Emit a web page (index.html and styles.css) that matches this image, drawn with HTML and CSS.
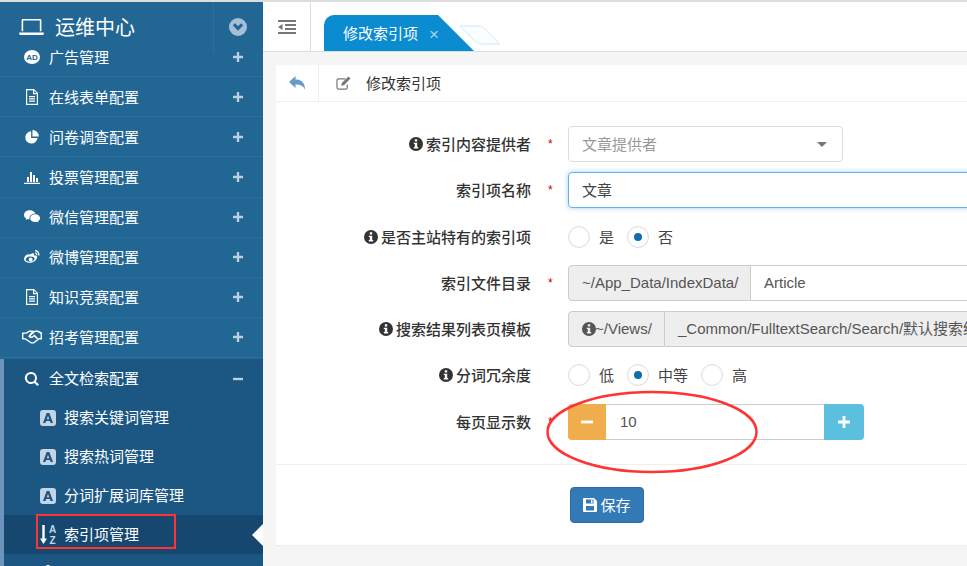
FILE: index.html
```html
<!DOCTYPE html>
<html lang="zh">
<head>
<meta charset="utf-8">
<title>运维中心</title>
<link rel="stylesheet" href="styles.css">
</head>
<body>
<svg class="sprite" width="0" height="0" aria-hidden="true">
  <symbol id="plus" viewBox="0 0 12 12"><path d="M4.600 0h2.800v4.600H12v2.800H7.400V12H4.600V7.400H0V4.600h4.600z"/></symbol>
  <symbol id="doc" viewBox="0 0 14 16"><path fill-rule="evenodd" d="M1 0h8l4 4v12H1zM2.200 1.200v13.600h9.600V5.200H8V1.200zM9.200 1.600v2.400h2.400zM4 7h6v1.200H4zM4 9.300h6v1.200H4zM4 11.600h6v1.200H4z"/></symbol>
  <symbol id="letter" viewBox="0 0 16 16"><path fill-rule="evenodd" d="M3 0h10a3 3 0 0 1 3 3v10a3 3 0 0 1-3 3H3a3 3 0 0 1-3-3V3a3 3 0 0 1 3-3zM6.700 3 3 13h2.400l.7-2h3.800l.7 2H13L9.300 3zM8 5.800 9.200 9.200H6.800z"/></symbol>
  <symbol id="info" viewBox="0 0 14 14"><path fill-rule="evenodd" d="M7 0a7 7 0 1 1 0 14A7 7 0 0 1 7 0zM5.800 2.200v2.200h2.400V2.200zM4.800 5.700v1.300h1v3.100h-1v1.500h4.400v-1.500h-1V5.700z"/></symbol>
</svg>
<div class="app">
  <aside class="sidebar">
    <header class="brand">
      <div class="brand-title">
        <svg class="brand-icon" viewBox="0 0 26 18"><path fill-rule="evenodd" d="M4 0h18a1.500 1.500 0 0 1 1.500 1.500V13h-1.700V1.700H4.200V13H2.500V1.500A1.500 1.500 0 0 1 4 0zM0 14.400h26v1.300a1.300 1.300 0 0 1-1.300 1.300H1.300A1.300 1.300 0 0 1 0 15.700z"/></svg>
        <span>运维中心</span>
      </div>
      <div class="brand-toggle">
        <svg viewBox="0 0 18 18"><circle cx="9" cy="9" r="9" fill="#a5bfd6"/><path d="M3.800 7.300 6 5.300 9 8.300l3-3 2.200 2L9 12.800z" fill="#22658f"/></svg>
      </div>
    </header>
    <ul class="menu">
      <li class="item">
        <svg class="icon" viewBox="0 0 16 14"><ellipse cx="8" cy="7" rx="8" ry="7" fill="#fff"/><text class="ad-mark" x="8" y="10" text-anchor="middle">AD</text></svg>
        <span class="label">广告管理</span><svg class="toggle"><use href="#plus"/></svg>
      </li>
      <li class="item"><svg class="icon icon-doc"><use href="#doc"/></svg><span class="label">在线表单配置</span><svg class="toggle"><use href="#plus"/></svg></li>
      <li class="item">
        <svg class="icon" viewBox="0 0 16 16"><path d="M7 1.500A7 7 0 1 0 14.300 9H7zM8.500 0v7.500H16A7.500 7.500 0 0 0 8.500 0z"/></svg>
        <span class="label">问卷调查配置</span><svg class="toggle"><use href="#plus"/></svg>
      </li>
      <li class="item">
        <svg class="icon" viewBox="0 0 16 14"><path d="M3 7h2v5H3zM6 2h2v10H6zM9 5h2v7H9zM12 8h2v4h-2zM0 12.700h16V14H0z"/></svg>
        <span class="label">投票管理配置</span><svg class="toggle"><use href="#plus"/></svg>
      </li>
      <li class="item">
        <svg class="icon" viewBox="0 0 18 15"><path d="M6.500 0C2.900 0 0 2.300 0 5.200c0 1.600.9 3 2.400 4L1.800 11l2.200-1.200c.7.200 1.500.3 2.300.3a5 5 0 0 1-.2-1.300C6.100 6 8.700 3.900 12.100 3.900h.7C12.100 1.700 9.500 0 6.500 0z"/><path d="M18 8.800c0-2.400-2.500-4.300-5.500-4.300S7 6.400 7 8.800s2.500 4.300 5.500 4.300c.6 0 1.300-.1 1.900-.3l1.800 1-.5-1.500c1.400-.9 2.300-2.100 2.300-3.500z"/></svg>
        <span class="label">微信管理配置</span><svg class="toggle"><use href="#plus"/></svg>
      </li>
      <li class="item">
        <svg class="icon" viewBox="0 0 16 14"><path fill-rule="evenodd" d="M6.500 4.300c2-1.400 3.500-1.300 3.700.2l-.1 1c1.800-.4 3 .2 3 1.500 0 2.800-3.500 5.800-7.200 5.800C3 12.800 0 11.400 0 9c0-1.400 1-3 3-4.400zM6 6.500C3.500 6.700 1.600 8 1.700 9.600 1.900 11 3.900 12 6.300 11.800 8.800 11.600 10.700 10.200 10.600 8.700 10.400 7.200 8.400 6.300 6 6.500zM5.800 7.800a2 2 0 1 1 0 3.600 2 2 0 0 1 0-3.600zM11 0c2.800 0 5 2.500 4.400 5.400h-1.300C14.500 3.200 13 1.300 11 1.300zM11 2.300c1.500 0 2.600 1.300 2.300 3h-1.200c.2-1-.3-1.800-1.100-1.800z"/></svg>
        <span class="label">微博管理配置</span><svg class="toggle"><use href="#plus"/></svg>
      </li>
      <li class="item"><svg class="icon icon-doc"><use href="#doc"/></svg><span class="label">知识竞赛配置</span><svg class="toggle"><use href="#plus"/></svg></li>
      <li class="item">
        <svg class="icon icon-wide" viewBox="0 0 20 13"><path fill-rule="evenodd" d="M0 2h4l3-2h3.500l1 .5L13 0h3l4 2v7h-3l-5 4H9L3 9H0zM1.400 3.300v4.400H3.500l6 4h2l5-4.100h2.100V3.300L15.500 1.400H13L8.500 5.400c.6.800 1.500.8 2.200.2L12.400 4l4 4-1 1-3.400-3-1 .9c-1.500 1-3.700.7-4.800-1.200L9.500 1.400H7.500L4.500 3.300z"/></svg>
        <span class="label">招考管理配置</span><svg class="toggle"><use href="#plus"/></svg>
      </li>
      <li class="group">
        <div class="item item-open">
          <svg class="icon" viewBox="0 0 14 14"><path fill-rule="evenodd" d="M6 0a6 6 0 0 1 4.800 9.500l3.200 3.100-1.600 1.400-3.100-3.100A6 6 0 1 1 6 0zM6 2a4 4 0 1 0 0 8 4 4 0 0 0 0-8z"/></svg>
          <span class="label">全文检索配置</span>
          <svg class="toggle" viewBox="0 0 12 12"><path d="M0 4.600h12v2.800H0z"/></svg>
        </div>
        <ul class="submenu">
          <li class="sub"><svg class="sub-icon"><use href="#letter"/></svg><span>搜索关键词管理</span></li>
          <li class="sub"><svg class="sub-icon"><use href="#letter"/></svg><span>搜索热词管理</span></li>
          <li class="sub"><svg class="sub-icon"><use href="#letter"/></svg><span>分词扩展词库管理</span></li>
          <li class="sub sub-active">
            <svg class="sort-icon" viewBox="0 0 17 19"><path d="M2.300 0h2.400v13.500h2.300L3.500 19 0 13.500h2.300z" fill="#fff"/><text class="sort-mark" x="12.500" y="8" text-anchor="middle">A</text><text class="sort-mark" x="12.500" y="18.500" text-anchor="middle">Z</text></svg>
            <span>索引项管理</span>
            <i class="sub-arrow"></i>
          </li>
          <li class="sub">
            <svg class="sub-tip" viewBox="0 0 16 18"><path d="M8 0a2.500 2.500 0 0 1 2.500 2.500V4L16 9v9H0V9l5.500-5V2.500A2.500 2.500 0 0 1 8 0z"/></svg>
          </li>
        </ul>
      </li>
    </ul>
  </aside>

  <main class="main">
    <div class="topbar">
      <div class="collapse">
        <svg viewBox="0 0 18 14"><path d="M0 0h18v2H0zM7 4h11v2H7zM7 8h11v2H7zM0 12h18v2H0zM0 7l4.500-3v6z" fill="#777"/></svg>
      </div>
      <div class="tabs">
        <div class="tab">
          <span>修改索引项</span><span class="tab-close">×</span>
        </div>
        <div class="ghost-tab"></div>
      </div>
    </div>
    <section class="card">
      <div class="card-head">
        <div class="back">
          <svg viewBox="0 0 16 14"><path d="M6.500 0v3.500C12 3.500 16 6 16 14c-1.500-4.200-4.500-5.500-9.500-5.500V12L0 6z" fill="#6a9bc8"/></svg>
        </div>
        <div class="card-title">
          <svg viewBox="0 0 16 15"><path fill="none" stroke="#777" stroke-width="1.300" d="M12 9v3.300a1.700 1.700 0 0 1-1.700 1.700H2.700A1.700 1.700 0 0 1 1 12.300V4.700A1.700 1.700 0 0 1 2.700 3H10"/><path fill="#777" d="M13.200 0.500 15.500 2.800 8.500 9.800 5.500 10.500 6.200 7.500z"/></svg>
          <span>修改索引项</span>
        </div>
      </div>
      <form class="form">
        <div class="row">
          <label class="field-label"><svg class="info"><use href="#info"/></svg>索引内容提供者</label><span class="req">*</span>
          <div class="select"><span>文章提供者</span><i class="caret"></i></div>
        </div>
        <div class="row">
          <label class="field-label">索引项名称</label><span class="req">*</span>
          <div class="text-input">文章</div>
        </div>
        <div class="row">
          <label class="field-label"><svg class="info"><use href="#info"/></svg>是否主站特有的索引项</label><span class="req"></span>
          <div class="radios">
            <span class="radio"></span><span class="radio-text">是</span>
            <span class="radio checked"></span><span class="radio-text">否</span>
          </div>
        </div>
        <div class="row">
          <label class="field-label">索引文件目录</label><span class="req">*</span>
          <div class="group-input">
            <span class="addon addon-data">~/App_Data/IndexData/</span>
            <span class="group-text">Article</span>
          </div>
        </div>
        <div class="row">
          <label class="field-label"><svg class="info"><use href="#info"/></svg>搜索结果列表页模板</label><span class="req"></span>
          <div class="group-input">
            <span class="addon addon-views"><svg class="info info-addon"><use href="#info"/></svg>~/Views/</span>
            <span class="group-text group-readonly">_Common/FulltextSearch/Search/默认搜索结果列表页模板.cshtml</span>
          </div>
        </div>
        <div class="row">
          <label class="field-label"><svg class="info"><use href="#info"/></svg>分词冗余度</label><span class="req"></span>
          <div class="radios">
            <span class="radio"></span><span class="radio-text">低</span>
            <span class="radio checked"></span><span class="radio-text">中等</span>
            <span class="radio"></span><span class="radio-text">高</span>
          </div>
        </div>
        <div class="row">
          <label class="field-label">每页显示数</label><span class="req">*</span>
          <div class="stepper">
            <span class="step step-minus"><svg viewBox="0 0 12 12"><path d="M0 4.600h12v2.800H0z"/></svg></span>
            <span class="step-value">10</span>
            <span class="step step-plus"><svg><use href="#plus"/></svg></span>
          </div>
        </div>
      </form>
      <div class="actions">
        <button class="save" type="button">
          <svg viewBox="0 0 14 14"><path fill-rule="evenodd" d="M1 0h10l3 3v10a1 1 0 0 1-1 1H1a1 1 0 0 1-1-1V1a1 1 0 0 1 1-1zM3 1.500v4h7.500v-4zM8 2h1.500v3H8zM3 8v4.500h8V8z" fill="#fff"/></svg>
          保存
        </button>
      </div>
    </section>
  </main>
</div>
<div class="note-rect"></div>
<svg class="note-ellipse" viewBox="0 0 216 88"><ellipse cx="108" cy="44" rx="104.500" ry="40" fill="none" stroke="#f33" stroke-width="2.500"/></svg>
</body>
</html>
```
FILE: styles.css
```css
* { box-sizing: border-box; }
html, body { margin: 0; height: 100%; }
body {
  width: 967px;
  height: 566px;
  overflow: hidden;
  position: relative;
  font: 15px/20px "Noto Sans CJK SC", "Liberation Sans", sans-serif;
  color: #333;
  background: #f5f5f5;
  border-top: 2px solid #ddd;
}
ul { list-style: none; margin: 0; padding: 0; }
.sprite { position: absolute; }

.app { display: flex; height: 564px; }

.sidebar {
  width: 263px;
  flex: none;
  background: #226694;
  color: #fff;
  overflow: hidden;
}
.brand {
  position: relative;
  z-index: 1;
  display: flex;
  height: 50px;
}
.brand-title {
  flex: 1;
  display: flex;
  align-items: center;
  gap: 11px;
  padding-left: 19px;
  font-size: 20px;
  fill: #fff;
}
.brand-icon { width: 25px; height: 17px; }
.brand-toggle {
  width: 50px;
  border-left: 1px solid #2a6f9d;
  display: flex;
  align-items: center;
  padding-left: 15px;
}
.brand-toggle svg { width: 18px; height: 18px; }

.menu { margin-top: -15px; }
.item {
  display: flex;
  align-items: center;
  height: 40.140px;
  padding: 0 20px 0 24px;
  border-bottom: 1px solid #2b6f9e;
  fill: #fff;
}
.icon { width: 16px; height: 14px; flex: none; }
.icon-doc { height: 16px; }
.icon-wide { width: 20px; margin-left: -2px; margin-right: -2px; }
.ad-mark { font: bold 8px "Liberation Sans", sans-serif; fill: #226694; }
.label { flex: 1; margin-left: 9px; }
.toggle { width: 10px; height: 10px; fill: #bcd0e0; flex: none; }

.group {
  background: #1c5783;
  border-left: 4px solid #6c95bd;
  margin-top: 1px;
}
.item-open { border-bottom: 0; padding-left: 20px; height: 39px; }
.item-open .label { margin-bottom: 2px; }
.sub {
  display: flex;
  align-items: center;
  height: 39px;
  padding-left: 36px;
  gap: 8px;
  position: relative;
  fill: #fff;
}
.sub span { margin-bottom: 2px; }
.sub-icon { width: 16px; height: 16px; fill: #c3d5e4; flex: none; }
.sub-tip { width: 16px; height: 18px; flex: none; }
.sub-active { background: #15476f; }
.sort-icon { width: 17px; height: 19px; margin-right: -1px; flex: none; }
.sort-mark { font: bold 10px "Liberation Sans", sans-serif; fill: #c3d5e4; }
.sub-arrow {
  position: absolute;
  right: 0;
  top: 9px;
  border: 11px solid transparent;
  border-left: 0;
  border-right-color: #fff;
}

.main { width: 704px; flex: none; display: flex; flex-direction: column; }
.topbar {
  display: flex;
  height: 50px;
  background: #fff;
  border-bottom: 1px solid #ddd;
  flex: none;
}
.collapse {
  width: 48px;
  border-right: 1px solid #ddd;
  display: flex;
  align-items: center;
  justify-content: center;
  padding-left: 1px;
}
.collapse svg { width: 18px; height: 14px; }
.tabs { display: flex; align-items: flex-end; padding-left: 13px; }
.tab {
  width: 150px;
  height: 36px;
  background: #0b8bd0;
  color: #fff;
  display: flex;
  align-items: center;
  padding: 0 0 1px 19px;
  border-radius: 10px 0 0 0;
  clip-path: polygon(0 0, 76% 0, 100% 100%, 0 100%);
}
.tab-close {
  margin: 4px 0 0 11px;
  font: 17px/1 "Liberation Sans", sans-serif;
  color: #a9d5ef;
}
.ghost-tab {
  width: 24px;
  height: 20px;
  margin: 0 0 6px -6px;
  background: #fbfeff;
  border: 2px solid #e3f3fd;
  border-radius: 3px;
  transform: skewX(45deg);
}

.card {
  margin: 13px 0 0 13px;
  background: #fff;
  height: 481px;
  flex: none;
  border-bottom: 1px solid #eee;
  overflow: hidden;
}
.card-head {
  display: flex;
  height: 36px;
  border-bottom: 1px solid #eee;
  box-sizing: content-box;
}
.back {
  width: 43px;
  border-right: 1px solid #eee;
  display: flex;
  align-items: center;
  justify-content: center;
}
.back svg { width: 16px; height: 14px; }
.card-title { display: flex; align-items: center; gap: 15px; padding-left: 17px; }
.card-title svg { width: 15px; height: 14px; }

.form {
  display: flex;
  flex-direction: column;
  gap: 10.300px;
  padding: 24px 0;
  border-bottom: 1px solid #eee;
}
.row { display: flex; align-items: center; height: 36px; }
.field-label {
  width: 255px;
  flex: none;
  display: flex;
  justify-content: flex-end;
  align-items: center;
  font-weight: 500;
  color: #333;
}
.info { width: 14px; height: 14px; fill: #333; margin-right: 3px; flex: none; }
.req {
  width: 37px;
  flex: none;
  padding-left: 17px;
  color: #c00;
  font: 12px/16px "Liberation Sans", sans-serif;
}
.select, .text-input {
  display: flex;
  align-items: center;
  flex: none;
  height: 36px;
  width: 275px;
  padding: 0 13px;
  border: 1px solid #ddd;
  border-radius: 4px;
  color: #999;
  justify-content: space-between;
}
.caret {
  border: 5px solid transparent;
  border-top-color: #777;
  border-bottom: 0;
  margin-right: 2px;
}
.text-input {
  width: 500px;
  color: #444;
  border-color: #66afe9;
  box-shadow: 0 0 5px rgba(102, 175, 233, .6);
}
.radios { display: flex; align-items: center; flex: none; }
.radio {
  width: 22px;
  height: 22px;
  border: 1px solid #ddd;
  border-radius: 50%;
  flex: none;
  background: #fff;
  box-shadow: inset 0 0 2px #eee;
  display: flex;
  align-items: center;
  justify-content: center;
}
.checked::after {
  content: "";
  width: 8px;
  height: 8px;
  border-radius: 50%;
  background: #0e6eab;
}
.radio-text { margin: 0 13px 0 9px; color: #444; }
.group-input {
  display: flex;
  height: 36px;
  width: 800px;
  flex: none;
  font-family: "Liberation Sans", "Noto Sans CJK SC", sans-serif;
}
.addon {
  display: flex;
  align-items: center;
  background: #eee;
  border: 1px solid #ccc;
  border-radius: 4px 0 0 4px;
  padding: 0 13px;
  color: #555;
  flex: none;
  white-space: nowrap;
}
.addon-data { width: 183px; }
.addon-views { width: 97px; }
.info-addon { fill: #555; margin-right: -1px; }
.group-text {
  flex: 1;
  display: flex;
  align-items: center;
  border: 1px solid #ccc;
  border-left: 0;
  padding-left: 13px;
  color: #555;
  white-space: nowrap;
}
.group-readonly { background: #eee; }
.stepper {
  display: flex;
  flex: none;
  width: 296px;
  height: 36px;
  font-family: "Liberation Sans", sans-serif;
}
.step {
  width: 38px;
  display: flex;
  align-items: center;
  justify-content: center;
  flex: none;
}
.step svg { width: 12px; height: 12px; fill: #fff; }
.step-minus { background: #f0ad4e; border-radius: 4px 0 0 4px; }
.step-plus { background: #5bc0de; border-radius: 0 4px 4px 0; width: 40px; }
.step-value {
  flex: 1;
  display: flex;
  align-items: center;
  padding-left: 14px;
  border: 1px solid #ccc;
  border-width: 1px 0;
  color: #555;
}

.actions { padding: 22px 0 0 294px; }
.save {
  display: flex;
  align-items: center;
  justify-content: center;
  gap: 3px;
  width: 74px;
  height: 36px;
  padding: 0;
  background: #337ab7;
  border: 1px solid #2e6da4;
  border-radius: 4px;
  color: #fff;
  font: inherit;
}
.save svg { width: 14px; height: 14px; }

.note-rect {
  position: absolute;
  left: 36px;
  top: 512px;
  width: 140px;
  height: 35px;
  border: 2.500px solid #f33;
}
.note-ellipse {
  position: absolute;
  left: 544px;
  top: 386px;
  width: 216px;
  height: 88px;
}
```
